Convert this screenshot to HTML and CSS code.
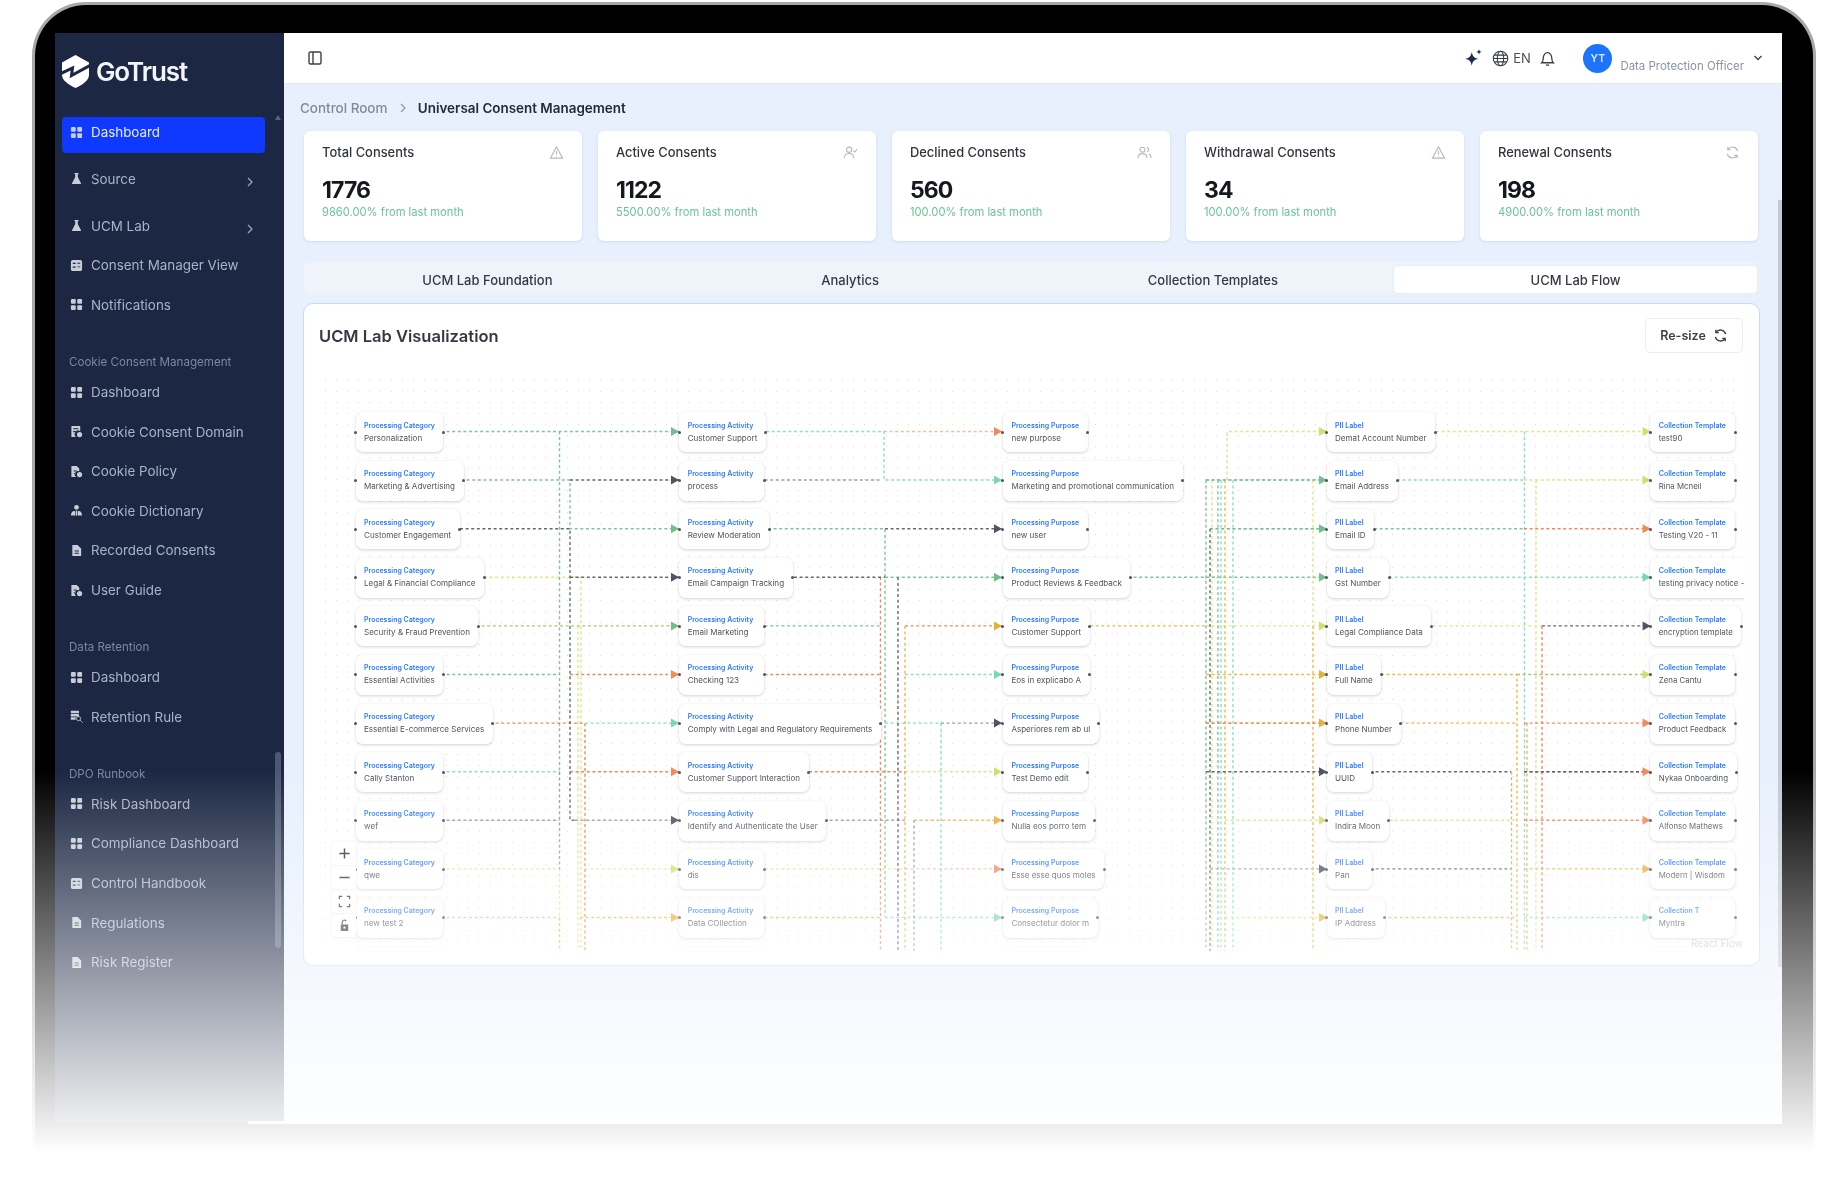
FILE: index.html
```html
<!DOCTYPE html>
<html lang="en">
<head>
<meta charset="utf-8">
<title>GoTrust - Universal Consent Management</title>
<link rel="stylesheet" href="styles.css">
</head>
<body>
<svg class="sprites" aria-hidden="true">
  <symbol id="i-grid" viewBox="0 0 14 14"><rect x="1" y="1" width="5.2" height="5.2" rx="1.2"/><rect x="7.8" y="1" width="5.2" height="5.2" rx="1.2"/><rect x="1" y="7.8" width="5.2" height="5.2" rx="1.2"/><rect x="7.8" y="7.8" width="5.2" height="5.2" rx="1.2"/></symbol>
  <symbol id="i-flask" viewBox="0 0 14 14"><path d="M4.8 1h4.4v1.2h-.8v3.2l3.4 6.6c.3.6 0 1-.6 1H2.800c-.6 0-.9-.4-.6-1l3.400-6.600V2.200h-.8z"/></symbol>
  <symbol id="i-form" viewBox="0 0 14 14"><path fill-rule="evenodd" d="M3 1h8a2 2 0 0 1 2 2v8a2 2 0 0 1-2 2H3a2 2 0 0 1-2-2V3a2 2 0 0 1 2-2zm0 3v1.500h3V4zm5 0v1h3V4zM3 8v1.500h3V8zm5 0v1h3V8z"/></symbol>
  <symbol id="i-doc" viewBox="0 0 14 14"><path fill-rule="evenodd" d="M2.500 1h5.700L12 4.800V13H2.500zM5 7v1h4.500V7zm0 2.500v1h4.500v-1z"/></symbol>
  <symbol id="i-doccheck" viewBox="0 0 14 14"><path fill-rule="evenodd" d="M1.500 1h5.700L10 3.800v3A3.500 3.500 0 0 0 6.800 13H1.500zM4 6v1h3V6zm0 2.500v1h2v-1z"/><circle cx="10.300" cy="10.300" r="2.800"/></symbol>
  <symbol id="i-domain" viewBox="0 0 14 14"><path fill-rule="evenodd" d="M1.500 1h9.500v5.600A3.500 3.500 0 0 0 6.800 13H1.500zM3.500 3.500v1.200h5.500V3.500zm0 3v1.200h3V6.500z"/><circle cx="10.300" cy="10.300" r="2.800"/></symbol>
  <symbol id="i-people" viewBox="0 0 14 14"><circle cx="7" cy="3.600" r="2.600"/><path d="M1 12.500c0-3.200 1.600-5 3.400-5 .8 0 1.200.4 1.200 1.200v3.800zM13 12.500c0-3.200-1.600-5-3.400-5-.8 0-1.200.4-1.200 1.200v3.800z"/><path d="M6.200 7h1.600v5.500H6.200z"/></symbol>
  <symbol id="i-dbsearch" viewBox="0 0 16 16"><path d="M1 1h10v3H1zM1 5h10v3H1zM1 9h6v3H1z"/><circle cx="10.500" cy="10.500" r="2.600" fill="none" stroke="currentColor"/><path d="M12.500 12.500l3 3" fill="none" stroke="currentColor"/></symbol>
  <symbol id="i-warn" viewBox="0 0 16 16"><path d="M8 2L1.500 14h13zM8 6.500v4M8 11.800v.8"/></symbol>
  <symbol id="i-userx" viewBox="0 0 16 16"><circle cx="6.500" cy="5" r="2.800"/><path d="M1.500 14c0-3.200 2.200-5 5-5s5 1.800 5 5M11 6l1.500 1.500L15 4.500"/></symbol>
  <symbol id="i-users" viewBox="0 0 16 16"><circle cx="5.800" cy="5" r="2.600"/><path d="M1 14c0-3 2-4.800 4.800-4.800s4.800 1.800 4.800 4.800M10.500 2.500a2.600 2.600 0 0 1 0 5M12.500 9.500c1.500.6 2.500 2.200 2.500 4.500"/></symbol>
  <symbol id="i-refresh" viewBox="0 0 16 16"><path d="M13.500 6.500A5.700 5.700 0 0 0 3.200 4.700M2.500 9.500a5.700 5.700 0 0 0 10.300 1.800M3 1.800v3.200h3.200M13 14.200V11H9.800"/></symbol>
</svg>

<div class="device">
  <div class="screen">
    <aside class="sidebar">
      <div class="brand">
        <svg class="brand-mark" viewBox="0 0 27 33"><path d="M13.500 0L27 7.500V20c0 5-6 9.500-13.500 13C6 29.500 0 25 0 20V7.500z"/><path class="brand-cut" d="M-1 18.500L10.500 13 9.500 20.500 28 10.500"/></svg>
        <span class="brand-name">GoTrust</span>
      </div>
      <nav class="nav">
        <a class="nav-item is-active"><svg class="ico"><use href="#i-grid"/></svg>Dashboard</a>
        <a class="nav-item is-open"><svg class="ico"><use href="#i-flask"/></svg>Source<svg class="chev" viewBox="0 0 10 10"><path d="M3 1l4 4-4 4"/></svg></a>
        <a class="nav-item"><svg class="ico"><use href="#i-flask"/></svg>UCM Lab<svg class="chev" viewBox="0 0 10 10"><path d="M3 1l4 4-4 4"/></svg></a>
        <a class="nav-item"><svg class="ico"><use href="#i-form"/></svg>Consent Manager View</a>
        <a class="nav-item"><svg class="ico"><use href="#i-grid"/></svg>Notifications</a>
        <div class="nav-label">Cookie Consent Management</div>
        <a class="nav-item"><svg class="ico"><use href="#i-grid"/></svg>Dashboard</a>
        <a class="nav-item"><svg class="ico"><use href="#i-domain"/></svg>Cookie Consent Domain</a>
        <a class="nav-item"><svg class="ico"><use href="#i-doccheck"/></svg>Cookie Policy</a>
        <a class="nav-item"><svg class="ico"><use href="#i-people"/></svg>Cookie Dictionary</a>
        <a class="nav-item"><svg class="ico"><use href="#i-doc"/></svg>Recorded Consents</a>
        <a class="nav-item"><svg class="ico"><use href="#i-doccheck"/></svg>User Guide</a>
        <div class="nav-label">Data Retention</div>
        <a class="nav-item"><svg class="ico"><use href="#i-grid"/></svg>Dashboard</a>
        <a class="nav-item"><svg class="ico"><use href="#i-dbsearch"/></svg>Retention Rule</a>
        <div class="nav-label">DPO Runbook</div>
        <a class="nav-item"><svg class="ico"><use href="#i-grid"/></svg>Risk Dashboard</a>
        <a class="nav-item"><svg class="ico"><use href="#i-grid"/></svg>Compliance Dashboard</a>
        <a class="nav-item"><svg class="ico"><use href="#i-form"/></svg>Control Handbook</a>
        <a class="nav-item"><svg class="ico"><use href="#i-doc"/></svg>Regulations</a>
        <a class="nav-item"><svg class="ico"><use href="#i-doc"/></svg>Risk Register</a>
      </nav>
      <span class="side-arrow"></span>
      <span class="side-thumb"></span>
    </aside>

    <main class="main">
      <header class="topbar">
        <svg class="panel-toggle" viewBox="0 0 14 14"><rect x="1" y="1" width="12" height="12" rx="1.500"/><path d="M5 1v12"/></svg>
        <div class="top-right">
          <svg class="spark" viewBox="0 0 18 18"><path d="M7 3.500c.8 4 2 5.300 6 6.200-4 .9-5.200 2.200-6 6.300-.8-4.100-2-5.400-6-6.300 4-.9 5.200-2.200 6-6.200z"/><path d="M13.500 1c.3 1.700.8 2.200 2.500 2.500-1.700.3-2.200.8-2.500 2.500-.3-1.700-.8-2.200-2.500-2.500 1.700-.3 2.200-.8 2.500-2.500z"/></svg>
          <svg class="globe" viewBox="0 0 16 16"><circle cx="8" cy="8" r="6.800"/><ellipse cx="8" cy="8" rx="3" ry="6.800"/><path d="M1.200 8h13.600M2 4.800h12M2 11.200h12"/></svg>
          <span class="lang">EN</span>
          <svg class="bell" viewBox="0 0 16 16"><path d="M2.500 12c1-1 1.500-2 1.500-4.500C4 5 5.700 2.500 8 2.500s4 2.500 4 5c0 2.500.5 3.500 1.500 4.500zM6.500 14.200h3"/></svg>
          <span class="avatar">YT</span>
          <span class="role">Data Protection Officer</span>
          <svg class="caret" viewBox="0 0 10 10"><path d="M1.500 3l3.500 3.500L8.500 3"/></svg>
        </div>
      </header>

      <div class="content">
        <div class="crumbs"><span class="crumb-muted">Control Room</span><svg class="crumb-sep" viewBox="0 0 10 10"><path d="M3 1l4 4-4 4"/></svg><span class="crumb-current">Universal Consent Management</span></div>

        <section class="stats">
          <article class="stat"><div class="stat-head"><span>Total Consents</span><svg class="stat-ico"><use href="#i-warn"/></svg></div><div class="stat-value">1776</div><div class="stat-sub">9860.00% from last month</div></article>
          <article class="stat"><div class="stat-head"><span>Active Consents</span><svg class="stat-ico"><use href="#i-userx"/></svg></div><div class="stat-value">1122</div><div class="stat-sub">5500.00% from last month</div></article>
          <article class="stat"><div class="stat-head"><span>Declined Consents</span><svg class="stat-ico"><use href="#i-users"/></svg></div><div class="stat-value">560</div><div class="stat-sub">100.00% from last month</div></article>
          <article class="stat"><div class="stat-head"><span>Withdrawal Consents</span><svg class="stat-ico"><use href="#i-warn"/></svg></div><div class="stat-value">34</div><div class="stat-sub">100.00% from last month</div></article>
          <article class="stat"><div class="stat-head"><span>Renewal Consents</span><svg class="stat-ico"><use href="#i-refresh"/></svg></div><div class="stat-value">198</div><div class="stat-sub">4900.00% from last month</div></article>
        </section>

        <div class="tabs">
          <button class="tab">UCM Lab Foundation</button>
          <button class="tab">Analytics</button>
          <button class="tab">Collection Templates</button>
          <button class="tab is-active">UCM Lab Flow</button>
        </div>

        <section class="panel">
          <div class="panel-head">
            <h2 class="panel-title">UCM Lab Visualization</h2>
            <button class="resize">Re-size<svg class="resize-ico"><use href="#i-refresh"/></svg></button>
          </div>
          <div class="canvas">
            <svg class="edges" viewBox="320 375 1422 576">
              <path class="e y" d="M484 577.300H581V951M578 625.900V951M441 868.900H559.500V917.500M585 868.900H679M905 771.700H1002M759 868.900H905M1227 480V431.500H1327M1212 480V951M1313 480V625.900M1206 625.900H1327M1225 820.300H1327M1225 917.500H1327M1436 431.500H1650M1433 625.900H1542M1536 480V951M1389 820.300H1517M1524 480H1650"/>
              <path class="e l" d="M884 431.500H1002M905 868.900H1002M441 917.500H559.500"/>
              <path class="e t" d="M585 723.100H679M441 771.700H559.500M766 431.500H884V480H1002M885 723.100H941V951M905 674.500H1002M885 917.500H1002M1221 480V951M1233 480V951M1206 480H1327M1210 528.700H1327M1397 480H1524M1389 577.300H1650M1524.500 431.500V951M1524 917.500H1650"/>
              <path class="e g" d="M441 431.500H679M461 480H570V528.700H679M559.500 431.500V772M441 674.500H559.500M768 528.700H885V917M885 577.300H1002M759 625.900H880M1128 577.300H1327M1206 480V951M1218 480V951M1206 480H1327M1210 528.700H1327M1374 528.700H1524"/>
              <path class="e x" d="M441 820.300H559.500M559.500 772V869M575 820.300H679M759 480H880M824 820.300H905M941 723.100H1002M914 820V951M1210 868.900H1327"/>
              <path class="e v" d="M476 625.900H679M1517 674.500H1650M1511.500 771.700V951"/>
              <path class="e a" d="M559.500 917.500V951M580 917.500H679M759 917.500H880M905 625.900V951M914 820.300H1002M1090 625.900H1206M1206 674.500H1327M1206 723.100H1327M1225 480V951M1313 625.900V951M1381 674.500H1517V951M1400 723.100H1517M1383 917.500H1517M1527 723.100V951M1524 868.900H1650"/>
              <path class="e o" d="M570 674.500H679M490 723.100H585V951M570 771.700H679M759 674.500H880M809 771.700H905M880.500 577V951M905 625.900H1002M1206 723.100H1327M1542 625.900V951M1524 528.700H1650M1524 723.100H1650M1524 771.700H1650M1524 820.300H1650"/>
              <path class="e d" d="M570 480H679M460 528.700H570V820.300H575M570 577.300H679M794 577.300H885M898 577.300V951M885 528.700H1002M1210 528.700V951M1206 771.700H1327M1370 771.700H1511M1542 625.900H1650M1370 868.900H1511M1524 771.700H1650"/>
              <path class="arrow g" d="M671 427l8 4.500-8 4.500zM671 524.200l8 4.500-8 4.500zM671 621.400l8 4.500-8 4.500zM994 572.800l8 4.500-8 4.500zM1319 475.500l8 4.500-8 4.500zM1319 524.200l8 4.500-8 4.500zM1319 572.800l8 4.500-8 4.500z"/>
              <path class="arrow d" d="M671 475.500l8 4.500-8 4.500zM671 572.800l8 4.500-8 4.500zM671 815.800l8 4.500-8 4.500zM994 524.200l8 4.500-8 4.500zM994 718.600l8 4.500-8 4.500zM1319 767.200l8 4.500-8 4.500zM1319 864.400l8 4.500-8 4.500zM1642.600 621.400l8 4.500-8 4.500z"/>
              <path class="arrow o" d="M671 670l8 4.500-8 4.500zM671 767.200l8 4.500-8 4.500zM994 427l8 4.500-8 4.500zM994 864.400l8 4.500-8 4.500zM1642.600 524.200l8 4.500-8 4.500zM1642.600 718.600l8 4.500-8 4.500zM1642.600 767.200l8 4.500-8 4.500zM1642.600 815.800l8 4.500-8 4.500z"/>
              <path class="arrow t" d="M671 718.600l8 4.500-8 4.500zM994 475.500l8 4.500-8 4.500zM994 670l8 4.500-8 4.500zM994 913l8 4.500-8 4.500zM1642.600 572.800l8 4.500-8 4.500zM1642.600 913l8 4.500-8 4.500z"/>
              <path class="arrow y" d="M671 864.400l8 4.500-8 4.500zM994 767.200l8 4.500-8 4.500zM1319 427l8 4.500-8 4.500zM1319 621.400l8 4.500-8 4.500zM1319 815.800l8 4.500-8 4.500zM1642.600 427l8 4.500-8 4.500zM1642.600 475.500l8 4.500-8 4.500zM1642.600 670l8 4.500-8 4.500z"/>
              <path class="arrow a" d="M671 913l8 4.500-8 4.500zM994 621.400l8 4.500-8 4.500zM994 815.800l8 4.500-8 4.500zM1319 670l8 4.500-8 4.500zM1319 718.600l8 4.500-8 4.500zM1319 913l8 4.500-8 4.500zM1642.600 864.400l8 4.500-8 4.500z"/>
            </svg>
            <div class="flow">
              <div class="flow-col">
                <div class="node"><b>Processing Category</b><span>Personalization</span></div>
                <div class="node"><b>Processing Category</b><span>Marketing &amp; Advertising</span></div>
                <div class="node"><b>Processing Category</b><span>Customer Engagement</span></div>
                <div class="node"><b>Processing Category</b><span>Legal &amp; Financial Compliance</span></div>
                <div class="node"><b>Processing Category</b><span>Security &amp; Fraud Prevention</span></div>
                <div class="node"><b>Processing Category</b><span>Essential Activities</span></div>
                <div class="node"><b>Processing Category</b><span>Essential E-commerce Services</span></div>
                <div class="node"><b>Processing Category</b><span>Cally Stanton</span></div>
                <div class="node"><b>Processing Category</b><span>wef</span></div>
                <div class="node"><b>Processing Category</b><span>qwe</span></div>
                <div class="node"><b>Processing Category</b><span>new test 2</span></div>
                <div class="node"></div>
              </div>
              <div class="flow-col">
                <div class="node"><b>Processing Activity</b><span>Customer Support</span></div>
                <div class="node"><b>Processing Activity</b><span>process</span></div>
                <div class="node"><b>Processing Activity</b><span>Review Moderation</span></div>
                <div class="node"><b>Processing Activity</b><span>Email Campaign Tracking</span></div>
                <div class="node"><b>Processing Activity</b><span>Email Marketing</span></div>
                <div class="node"><b>Processing Activity</b><span>Checking 123</span></div>
                <div class="node"><b>Processing Activity</b><span>Comply with Legal and Regulatory Requirements</span></div>
                <div class="node"><b>Processing Activity</b><span>Customer Support Interaction</span></div>
                <div class="node"><b>Processing Activity</b><span>Identify and Authenticate the User</span></div>
                <div class="node"><b>Processing Activity</b><span>dis</span></div>
                <div class="node"><b>Processing Activity</b><span>Data COllection</span></div>
                <div class="node"></div>
              </div>
              <div class="flow-col">
                <div class="node"><b>Processing Purpose</b><span>new purpose</span></div>
                <div class="node"><b>Processing Purpose</b><span>Marketing and promotional communication</span></div>
                <div class="node"><b>Processing Purpose</b><span>new user</span></div>
                <div class="node"><b>Processing Purpose</b><span>Product Reviews &amp; Feedback</span></div>
                <div class="node"><b>Processing Purpose</b><span>Customer Support</span></div>
                <div class="node"><b>Processing Purpose</b><span>Eos in explicabo A</span></div>
                <div class="node"><b>Processing Purpose</b><span>Asperiores rem ab ul</span></div>
                <div class="node"><b>Processing Purpose</b><span>Test Demo edit</span></div>
                <div class="node"><b>Processing Purpose</b><span>Nulla eos porro tem</span></div>
                <div class="node"><b>Processing Purpose</b><span>Esse esse quos moles</span></div>
                <div class="node"><b>Processing Purpose</b><span>Consectetur dolor m</span></div>
                <div class="node"></div>
              </div>
              <div class="flow-col">
                <div class="node"><b>PII Label</b><span>Demat Account Number</span></div>
                <div class="node"><b>PII Label</b><span>Email Address</span></div>
                <div class="node"><b>PII Label</b><span>Email ID</span></div>
                <div class="node"><b>PII Label</b><span>Gst Number</span></div>
                <div class="node"><b>PII Label</b><span>Legal Compliance Data</span></div>
                <div class="node"><b>PII Label</b><span>Full Name</span></div>
                <div class="node"><b>PII Label</b><span>Phone Number</span></div>
                <div class="node node-narrow"><b>PII Label</b><span>UUID</span></div>
                <div class="node"><b>PII Label</b><span>Indira Moon</span></div>
                <div class="node node-narrow"><b>PII Label</b><span>Pan</span></div>
                <div class="node"><b>PII Label</b><span>IP Address</span></div>
                <div class="node"></div>
              </div>
              <div class="flow-col">
                <div class="node"><b>Collection Template</b><span>test90</span></div>
                <div class="node"><b>Collection Template</b><span>Rina Mcneil</span></div>
                <div class="node"><b>Collection Template</b><span>Testing V20 - 11</span></div>
                <div class="node"><b>Collection Template</b><span>testing privacy notice -</span></div>
                <div class="node"><b>Collection Template</b><span>encryption template</span></div>
                <div class="node"><b>Collection Template</b><span>Zena Cantu</span></div>
                <div class="node"><b>Collection Template</b><span>Product Feedback</span></div>
                <div class="node"><b>Collection Template</b><span>Nykaa Onboarding</span></div>
                <div class="node"><b>Collection Template</b><span>Alfonso Mathews</span></div>
                <div class="node"><b>Collection Template</b><span>Modern | Wisdom</span></div>
                <div class="node"><b>Collection T</b><span>Myntra</span></div>
                <div class="node"></div>
              </div>
            </div>
            <div class="zoom-controls">
              <button class="zoom-btn"><svg viewBox="0 0 14 14"><path d="M7 1.500v11M1.500 7h11"/></svg></button>
              <button class="zoom-btn"><svg viewBox="0 0 14 14"><path d="M1.500 7h11"/></svg></button>
              <button class="zoom-btn"><svg viewBox="0 0 14 14"><path class="thin" d="M1.500 4.500V1.500h3M9.500 1.500h3v3M12.500 9.500v3h-3M4.500 12.500h-3v-3"/></svg></button>
              <button class="zoom-btn"><svg viewBox="0 0 14 14"><path class="thin" d="M4.500 6V3.500a2.300 2.300 0 0 1 4.200-1.200"/><path class="solid" fill-rule="evenodd" d="M3 6h8v7H3zm4 2.200a1.200 1.200 0 1 0 0 2.400 1.200 1.200 0 0 0 0-2.400z"/></svg></button>
            </div>
            <span class="attribution">React Flow</span>
          </div>
        </section>
      </div>
      <span class="main-thumb"></span>
    </main>
  </div>
  <span class="screen-lip"></span>
</div>
<div class="fade"></div>
</body>
</html>
```

FILE: styles.css
```css
* { box-sizing: border-box; }

html, body { margin: 0; padding: 0; }

body {
  position: relative;
  width: 1848px;
  height: 1204px;
  overflow: hidden;
  background: #fff;
  font-family: "Inter", "Noto Sans", sans-serif;
  color: #2b303b;
}

.sprites { display: none; }

/* Device frame */
.device {
  position: relative;
  width: 1784px;
  height: 1150px;
  margin: 2px 0 0 32px;
  padding: 28px 31px 0 20px;
  background: #000;
  border: 3px solid #a8a8a8;
  border-bottom: 0;
  border-radius: 54px 54px 0 0;
  filter: blur(0.55px);
}

.screen {
  display: flex;
  height: 1090px;
}

.screen-lip {
  position: absolute;
  left: 213px;
  top: 1116px;
  width: 1534px;
  height: 3px;
  background: #fff;
}

.fade {
  position: absolute;
  left: 0;
  right: 0;
  top: 770px;
  height: 434px;
  background: linear-gradient(to bottom, rgba(255,255,255,0) 0, #fff 382px);
}

/* Sidebar */
.sidebar {
  position: relative;
  flex: 0 0 229px;
  padding-left: 7px;
  background: #1b2743;
  overflow: hidden;
}

.brand {
  display: flex;
  align-items: center;
  height: 84px;
  padding-bottom: 8px;
}

.brand-mark {
  width: 27px;
  height: 33px;
  fill: #fff;
  overflow: hidden;
}

.brand-cut {
  fill: none;
  stroke: #1b2743;
  stroke-width: 3;
}

.brand-name {
  margin-left: 7px;
  font-size: 26px;
  font-weight: 600;
  letter-spacing: -1.1px;
  color: #f4f5f7;
}

.nav-item {
  display: flex;
  align-items: center;
  width: 203px;
  height: 39.6px;
  padding-left: 8px;
  font-size: 13.4px;
  color: #aab3c7;
}

.nav-item.is-active {
  height: 36px;
  margin-bottom: 6px;
  padding-bottom: 6px;
  border-radius: 4px;
  background: #0f39ff;
  color: #e8edff;
}

.nav-item.is-open { height: 47px; padding-bottom: 7.5px; }

.nav-label {
  height: 19.5px;
  margin-top: 28px;
  padding-left: 7px;
  font-size: 11.6px;
  line-height: 19.5px;
  color: #7b88a3;
}

.ico {
  flex: none;
  width: 13px;
  height: 13px;
  margin-right: 8px;
  fill: #c8cdd7;
  color: #c8cdd7;
}

.chev {
  width: 10px;
  height: 10px;
  margin-left: auto;
  margin-right: 10px;
  margin-top: 6px;
  fill: none;
  stroke: #9aa4b8;
  stroke-width: 1.3;
}

.side-arrow {
  position: absolute;
  left: 220px;
  top: 82px;
  border: 3.5px solid transparent;
  border-top: 0;
  border-bottom: 5px solid #5a6478;
}

.side-thumb {
  position: absolute;
  left: 220px;
  top: 719px;
  width: 6px;
  height: 196px;
  border-radius: 3px;
  background: #4c5871;
}

/* Main column */
.main {
  position: relative;
  flex: 1;
  display: flex;
  flex-direction: column;
  background: #e8f0fd;
  overflow: hidden;
}

.topbar {
  flex: none;
  display: flex;
  align-items: center;
  justify-content: space-between;
  height: 51px;
  padding: 0 19px 0 24px;
  background: #fff;
  border-bottom: 1px solid #dfe8f6;
}

.panel-toggle {
  width: 14px;
  height: 14px;
  fill: none;
  stroke: #3b404b;
  stroke-width: 1.4;
}

.top-right {
  display: flex;
  align-items: center;
}

.spark { width: 20px; height: 20px; fill: #1d2b4f; }

.globe {
  width: 17px;
  height: 17px;
  margin-left: 8px;
  fill: none;
  stroke: #363b46;
  stroke-width: 1;
}

.lang {
  margin-left: 4px;
  font-size: 13px;
  color: #4a4f5a;
}

.bell {
  width: 17px;
  height: 17px;
  margin-left: 8.5px;
  fill: none;
  stroke: #363b46;
  stroke-width: 1.2;
}

.avatar {
  display: flex;
  align-items: center;
  justify-content: center;
  width: 29px;
  height: 29px;
  margin-left: 27px;
  border-radius: 50%;
  background: #1b74fb;
  font-size: 10.5px;
  font-weight: 600;
  color: #dce9ff;
}

.role {
  margin-left: 8px;
  padding-top: 15px;
  font-size: 11.45px;
  color: #8a93a3;
}

.caret {
  width: 10px;
  height: 10px;
  margin-left: 9px;
  fill: none;
  stroke: #3b404b;
  stroke-width: 1.3;
}

.main-thumb {
  position: absolute;
  right: 0;
  top: 167px;
  width: 4px;
  height: 767px;
  background: #c4c9d2;
}

.content { padding: 0 23px 0 20px; }

.crumbs {
  display: flex;
  align-items: center;
  height: 20px;
  margin: 14px 0 13px -4px;
  font-size: 13.45px;
  font-weight: 500;
}

.crumb-muted { color: #7f8a9a; }

.crumb-sep {
  width: 10px;
  height: 10px;
  margin: 0 10.25px;
  fill: none;
  stroke: #8e97a5;
  stroke-width: 1.2;
}

.crumb-current { font-weight: 600; color: #252a35; }

/* Stats */
.stats {
  display: grid;
  grid-template-columns: repeat(5, 278px);
  column-gap: 16px;
}

.stat {
  height: 110px;
  padding: 12px 18px;
  border-radius: 6px;
  background: #fff;
  box-shadow: 0 1px 3px rgba(90, 120, 170, .18);
}

.stat-head {
  display: flex;
  align-items: center;
  justify-content: space-between;
  height: 18px;
  font-size: 12.9px;
  font-weight: 500;
  color: #30353f;
}

.stat-ico {
  width: 15px;
  height: 15px;
  fill: none;
  stroke: #b4bac5;
  stroke-width: 1.2;
}

.stat-value {
  height: 30px;
  margin-top: 14px;
  font-size: 23px;
  font-weight: 700;
  letter-spacing: -0.9px;
  line-height: 30px;
  color: #15181f;
}

.stat-sub {
  font-size: 11.2px;
  line-height: 14px;
  color: #69c494;
}

/* Tabs */
.tabs {
  display: grid;
  grid-template-columns: repeat(4, 1fr);
  height: 33px;
  margin-top: 21px;
  padding: 4px 2px 2px;
  border-radius: 6px;
  background: #eff4fa;
}

.tab {
  padding: 0;
  border: 0;
  border-radius: 4px;
  background: transparent;
  font-family: inherit;
  font-size: 13px;
  font-weight: 500;
  color: #343944;
}

.tab.is-active {
  background: #fff;
  box-shadow: 0 0 2px rgba(90, 120, 170, .2);
}

/* Panel */
.panel {
  height: 663px;
  margin: 8px -1px 0 -1px;
  padding: 14px 15px 0 16px;
  border: 1px solid #c9daf3;
  border-radius: 10px;
  background: #fff;
}

.panel-head {
  display: flex;
  align-items: center;
  justify-content: space-between;
  height: 35px;
  margin-bottom: 22px;
}

.panel-title {
  margin: 0 0 0 -1px;
  font-size: 16.5px;
  font-weight: 600;
  color: #343944;
}

.resize {
  display: flex;
  align-items: center;
  justify-content: center;
  gap: 7px;
  width: 98px;
  height: 35px;
  margin-right: 1px;
  padding: 0;
  border: 1px solid #e8edf5;
  border-radius: 5px;
  background: #fff;
  font-family: inherit;
  font-size: 12.5px;
  font-weight: 600;
  color: #3a3f4a;
}

.resize-ico {
  width: 15px;
  height: 15px;
  fill: none;
  stroke: #3a3f4a;
  stroke-width: 1.4;
}

/* Flow canvas: a free canvas, so overlays sit on top of it */
.canvas {
  position: relative;
  height: 576px;
  overflow: hidden;
  background-image: radial-gradient(circle, #dcdcdc 0.8px, transparent 1px);
  background-size: 11px 11px;
}

.edges {
  position: absolute;
  inset: 0;
  width: 1422px;
  height: 576px;
}

.e {
  fill: none;
  stroke-width: 1.4;
  stroke-dasharray: 3 2.6;
  opacity: .88;
}

.e.y { stroke: #dbe47a; }
.e.l { stroke: #f5b48c; }
.e.t { stroke: #79dcc4; }
.e.g { stroke: #6fbd86; }
.e.x { stroke: #8d929c; }
.e.v { stroke: #a4bc5e; }
.e.a { stroke: #e6b135; }
.e.o { stroke: #f0764a; }
.e.d { stroke: #4f5462; }

.arrow.y { fill: #d5dd70; }
.arrow.t { fill: #79d6b8; }
.arrow.g { fill: #6fc08c; }
.arrow.a { fill: #e6b135; }
.arrow.o { fill: #f28a5c; }
.arrow.d { fill: #4f5462; }

.flow {
  position: relative;
  display: grid;
  grid-template-columns: repeat(5, 323.7px);
  padding: 37px 0 0 35.500px;
}

.flow-col {
  display: flex;
  flex-direction: column;
  align-items: flex-start;
  row-gap: 8.600px;
}

.node {
  position: relative;
  flex: none;
  display: flex;
  flex-direction: column;
  justify-content: center;
  width: fit-content;
  min-width: 85px;
  height: 40px;
  padding: 0 8.500px;
  border-radius: 7px;
  background: #fff;
  box-shadow: 0 1px 3px rgba(40, 50, 70, .22);
  white-space: nowrap;
}

.node-narrow { min-width: 43px; }

.node b {
  font-size: 7px;
  font-weight: 600;
  line-height: 12px;
  color: #2c7bff;
}

.node span {
  font-size: 8.05px;
  line-height: 13px;
  color: #50545c;
}

.node::before,
.node::after {
  content: "";
  position: absolute;
  top: 50%;
  width: 3px;
  height: 3px;
  margin-top: -1.500px;
  border-radius: 50%;
  background: #4f5462;
}

.node::before { left: -1.500px; }
.node::after { right: -1.500px; }

.flow-col:nth-child(4) .node { min-width: 0; }
.flow-col:nth-child(5) .node span { font-size: 7.85px; }

.zoom-controls {
  position: absolute;
  left: 12px;
  top: 467px;
  display: flex;
  flex-direction: column;
  box-shadow: 0 0 2px rgba(40, 50, 70, .12);
}

.zoom-btn {
  display: flex;
  align-items: center;
  justify-content: center;
  width: 24px;
  height: 24px;
  padding: 0;
  border: 0;
  border-bottom: 1px solid #f0f0f0;
  background: #fff;
}

.zoom-btn svg {
  width: 13px;
  height: 13px;
  fill: none;
  stroke: #2f333b;
  stroke-width: 1.6;
}

.zoom-btn .thin { stroke-width: 1.3; }
.zoom-btn .solid { fill: #2f333b; stroke: none; }

.attribution {
  position: absolute;
  right: 1px;
  bottom: 2px;
  font-size: 10px;
  color: #c9c9c9;
}
```
